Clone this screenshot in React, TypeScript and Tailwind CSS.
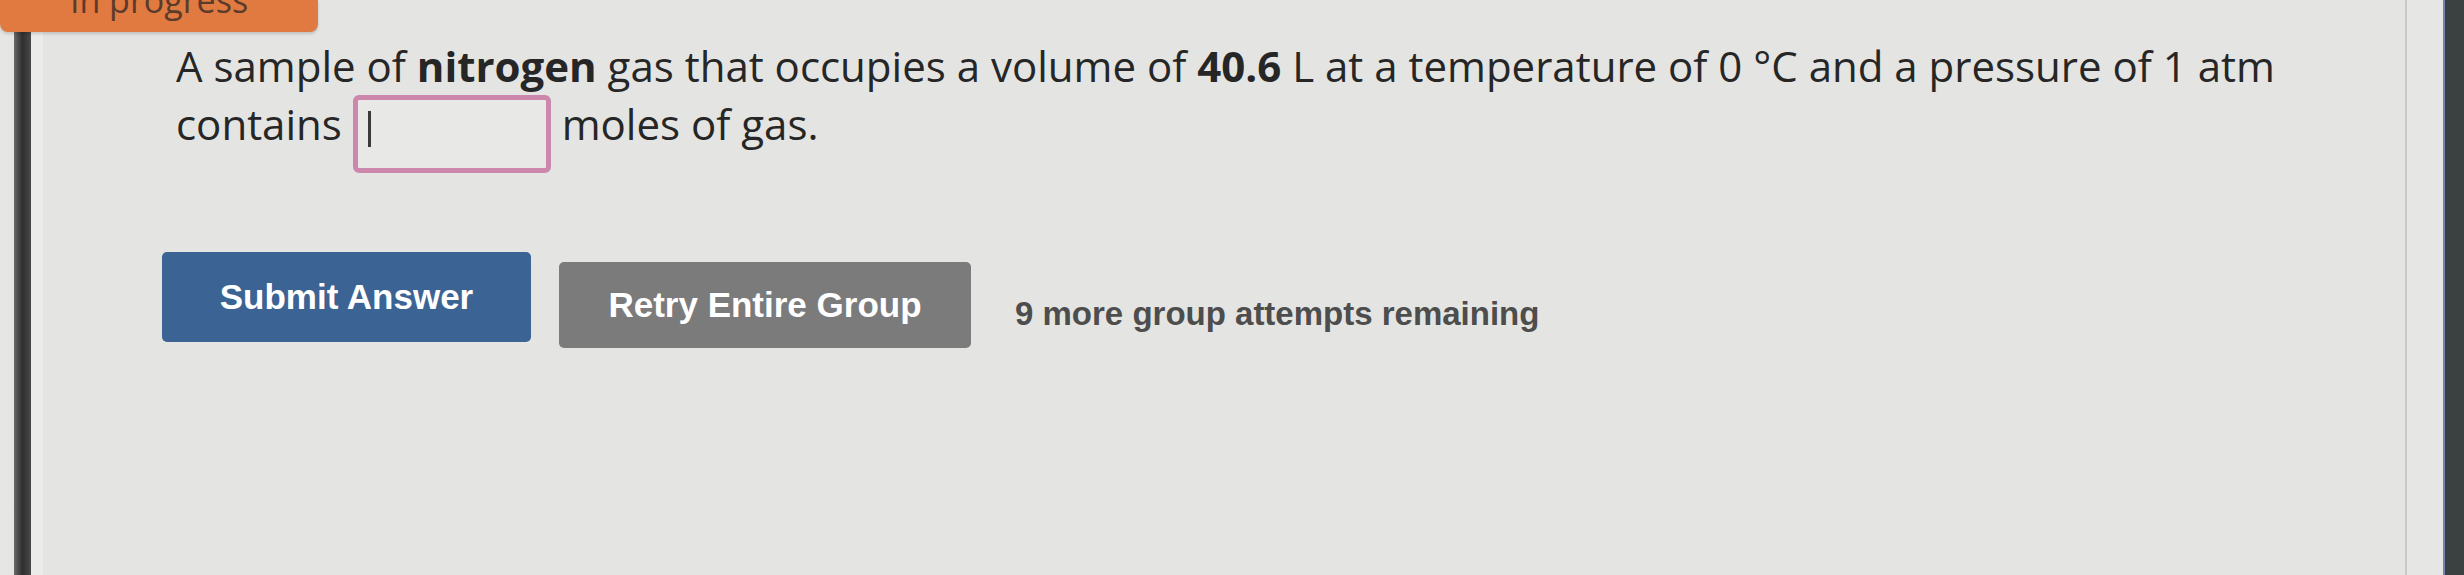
import React from "react";

const questionFont = { fontFamily: '"Open Sans", "Noto Sans", sans-serif' };

const App: React.FC = () => {
  return (
    <div className="relative flex h-[575px] w-[2464px] overflow-hidden bg-[#e4e4e2]">
      {/* Status tab */}
      <div className="absolute left-0 top-0 z-10 flex h-[32px] w-[318px] justify-center overflow-hidden rounded-b-[8px] bg-[#e07a40] shadow-[0_2px_3px_rgba(0,0,0,0.15)]">
        <span
          className="-mt-[20px] text-[34px] leading-[40px] text-[#5b3b2c]"
          style={questionFont}
        >
          In progress
        </span>
      </div>

      {/* Left rail */}
      <div className="w-[14px] bg-[#e6e6e4]" />
      <div className="w-[17px] bg-gradient-to-r from-[#6a6a6a] via-[#2f2f2f] to-[#4a4a4a]" />
      <div className="w-[12px] bg-[#ebebe9]" />

      {/* Question area */}
      <div className="flex-1 pl-[119px] pr-[75px] pt-[37px]">
        <p
          className="pl-[14px] text-[42px] leading-[58px] text-[#262626]"
          style={questionFont}
        >
          A sample of <span className="font-bold">nitrogen</span> gas that
          occupies a volume of <span className="font-bold">40.6</span> L at a
          temperature of 0 °C and a pressure of 1 atm contains{" "}
          <span className="inline-block h-[78px] w-[198px] overflow-hidden rounded-[6px] border-[5px] border-[#cd86ac] bg-[#e8e8e6] align-[-33px]">
            <span className="ml-[10px] mt-[11px] block h-[36px] w-[3px] bg-[#3a3a3a]" />
          </span>{" "}
          moles of gas.
        </p>

        <div
          className="mt-[79px] flex items-start"
          style={{ fontFamily: '"Liberation Sans", Arial, sans-serif' }}
        >
          <button className="flex h-[90px] w-[369px] items-center justify-center rounded-[5px] bg-[#3b6495] text-[35px] font-bold text-white">
            Submit Answer
          </button>
          <button className="ml-[28px] mt-[10px] flex h-[86px] w-[412px] items-center justify-center rounded-[5px] bg-[#7b7b7b] text-[35px] font-bold text-white">
            Retry Entire Group
          </button>
          <span className="ml-[44px] mt-[42px] text-[33px] font-bold leading-[40px] text-[#4d4d4d]">
            9 more group attempts remaining
          </span>
        </div>
      </div>

      {/* Right edge: panel border and bezel */}
      <div className="w-[2px] bg-[#c9cac8]" />
      <div className="w-[36px] bg-[#e6e7e5]" />
      <div className="w-[2px] bg-[#6f86b0]" />
      <div className="w-[19px] bg-[#3b4040]" />
    </div>
  );
};

export default App;
